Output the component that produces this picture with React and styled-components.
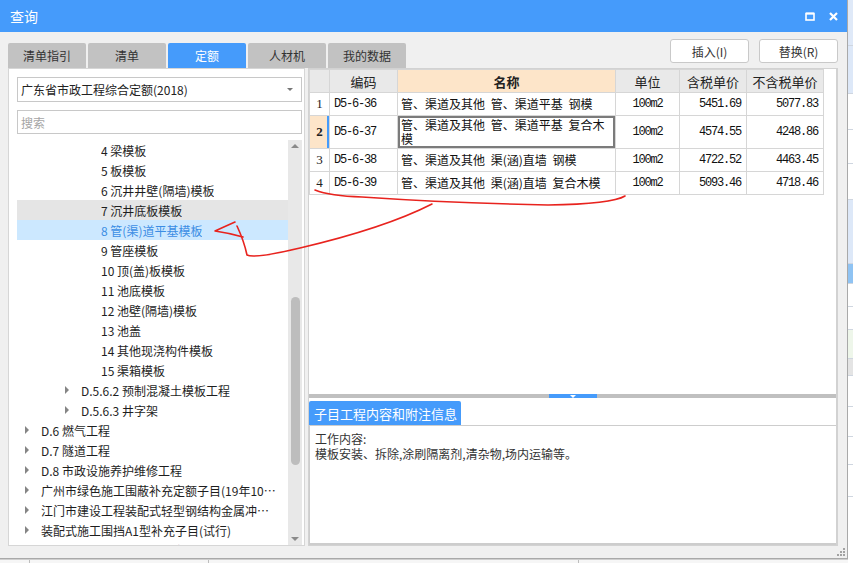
import React from 'react'
import styled, { createGlobalStyle } from 'styled-components'

const BLUE = '#459bfb'
const UI = `"Noto Sans CJK SC", "Noto Sans", sans-serif`
const MONO = `"Liberation Mono", "Noto Sans CJK SC", monospace`

const GlobalStyle = createGlobalStyle`
  html, body { margin: 0; padding: 0; }
  body { font-family: ${UI}; background: #fff; overflow: hidden; }
  * { box-sizing: border-box; }
`

const treeRows = [
  { level: 3, text: '4 梁模板' },
  { level: 3, text: '5 板模板' },
  { level: 3, text: '6 沉井井壁(隔墙)模板' },
  { level: 3, text: '7 沉井底板模板', hover: true },
  { level: 3, text: '8 管(渠)道平基模板', selected: true },
  { level: 3, text: '9 管座模板' },
  { level: 3, text: '10 顶(盖)板模板' },
  { level: 3, text: '11 池底模板' },
  { level: 3, text: '12 池壁(隔墙)模板' },
  { level: 3, text: '13 池盖' },
  { level: 3, text: '14 其他现浇构件模板' },
  { level: 3, text: '15 渠箱模板' },
  { level: 2, text: 'D.5.6.2 预制混凝土模板工程', arrow: true },
  { level: 2, text: 'D.5.6.3 井字架', arrow: true },
  { level: 0, text: 'D.6 燃气工程', arrow: true },
  { level: 0, text: 'D.7 隧道工程', arrow: true },
  { level: 0, text: 'D.8 市政设施养护维修工程', arrow: true },
  { level: 0, text: '广州市绿色施工围蔽补充定额子目(19年10月版)', arrow: true },
  { level: 0, text: '江门市建设工程装配式轻型钢结构金属冲孔板围挡', arrow: true },
  { level: 0, text: '装配式施工围挡A1型补充子目(试行)', arrow: true },
  { level: 0, text: '广州市市政工程计价综合定额(2010)', arrow: true },
]

const quotaRows = [
  { no: '1', code: 'D5-6-36', name: '管、渠道及其他 管、渠道平基 钢模', unit: '100m2', tax: '5451.69', notax: '5077.83' },
  { no: '2', code: 'D5-6-37', name: '管、渠道及其他 管、渠道平基 复合木\n模', unit: '100m2', tax: '4574.55', notax: '4248.86', active: true },
  { no: '3', code: 'D5-6-38', name: '管、渠道及其他 渠(涵)直墙 钢模', unit: '100m2', tax: '4722.52', notax: '4463.45' },
  { no: '4', code: 'D5-6-39', name: '管、渠道及其他 渠(涵)直墙 复合木模', unit: '100m2', tax: '5093.46', notax: '4718.46' },
]

const tabs = ['清单指引', '清单', '定额', '人材机', '我的数据']

const Page = styled.div`
  position: relative;
  width: 853px;
  height: 563px;
  display: grid;
  grid-template-columns: 848px 5px;
  grid-template-rows: 559px 4px;
  overflow: hidden;
`

const Dialog = styled.div`
  grid-column: 1;
  grid-row: 1;
  display: flex;
  flex-direction: column;
  background: #f0f0f0;
  border-right: 1px solid #a9a9a9;
  border-bottom: 1px solid #a9a9a9;
  min-width: 0;
  min-height: 0;
`

const TitleBar = styled.div`
  height: 32px;
  flex: none;
  display: flex;
  align-items: center;
  padding: 0 9px 0 10px;
  background: ${BLUE};
  color: #fff;
  font-size: 14px;
`

const WinButtons = styled.div`
  margin-left: auto;
  display: flex;
  align-items: center;
  gap: 14px;
  margin-top: 1px;
`

const Toolbar = styled.div`
  height: 36px;
  flex: none;
  display: flex;
  align-items: flex-end;
  padding: 0 9px 0 8px;
`

const TabRow = styled.div`
  display: flex;
  gap: 2px;
`

const Tab = styled.div`
  width: 78px;
  height: 25px;
  display: flex;
  align-items: center;
  justify-content: center;
  font-size: 12px;
  border-radius: 2px 2px 0 0;
  background: ${(p) => (p.$active ? BLUE : '#c2c2c2')};
  color: ${(p) => (p.$active ? '#fff' : '#333')};
`

const ActionGroup = styled.div`
  margin-left: auto;
  align-self: flex-start;
  margin-top: 7px;
  display: flex;
  gap: 10px;
`

const ActionButton = styled.div`
  width: 79px;
  height: 24px;
  display: flex;
  align-items: center;
  justify-content: center;
  background: #fff;
  border: 1px solid #c9c9c9;
  border-radius: 3px;
  font-size: 12px;
  color: #333;
`

const Main = styled.div`
  height: 478px;
  flex: none;
  display: flex;
  gap: 3px;
  padding: 0 9px 0 8px;
`

const LeftPanel = styled.div`
  width: 297px;
  flex: none;
  display: flex;
  flex-direction: column;
  background: #fff;
  border: 1px solid #d6d6d6;
  padding: 8px 2px 0 8px;
`

const Select = styled.div`
  height: 25px;
  flex: none;
  display: flex;
  align-items: center;
  padding: 0 8px 0 3px;
  border: 1px solid #c8c8c8;
  font-size: 12px;
  color: #222;
  span { flex: 1; }
`

const Caret = styled.i`
  width: 0;
  height: 0;
  border-left: 3px solid transparent;
  border-right: 3px solid transparent;
  border-top: 3px solid #777;
`

const Search = styled.div`
  height: 24px;
  flex: none;
  margin-top: 8px;
  display: flex;
  align-items: center;
  padding-left: 3px;
  border: 1px solid #c8c8c8;
  font-size: 12px;
  color: #a5a5a5;
`

const Tree = styled.div`
  flex: 1;
  min-height: 0;
  margin-top: 6px;
  display: flex;
`

const TreeList = styled.div`
  flex: 1;
  min-width: 0;
  overflow: hidden;
`

const TreeRow = styled.div`
  height: 20px;
  display: flex;
  align-items: center;
  padding-left: ${(p) => 8 + p.$level * 20}px;
  padding-right: 8px;
  font-size: 12px;
  background: ${(p) => (p.$selected ? '#cce8ff' : p.$hover ? '#e5e5e5' : 'transparent')};
  color: ${(p) => (p.$selected ? '#3b8de4' : '#1e1e1e')};
`

const ArrowSlot = styled.span`
  width: 16px;
  flex: none;
  display: flex;
  align-items: center;
`

const Arrow = styled.i`
  width: 0;
  height: 0;
  border-top: 4px solid transparent;
  border-bottom: 4px solid transparent;
  border-left: 4px solid #858585;
`

const RowText = styled.span`
  white-space: nowrap;
  overflow: hidden;
  text-overflow: ellipsis;
`

const ScrollBar = styled.div`
  width: 14px;
  flex: none;
  display: flex;
  flex-direction: column;
  align-items: center;
  background: #e8e8e8;
`

const ScrollArrow = styled.i`
  flex: none;
  margin: ${(p) => (p.$down ? 'auto 0 4px' : '4px 0 0')};
  width: 0;
  height: 0;
  border-left: 4px solid transparent;
  border-right: 4px solid transparent;
  border-bottom: ${(p) => (p.$down ? 'none' : '4px solid #8a8a8a')};
  border-top: ${(p) => (p.$down ? '4px solid #8a8a8a' : 'none')};
`

const Thumb = styled.div`
  flex: none;
  width: 9px;
  height: 168px;
  margin-top: 149px;
  border-radius: 5px;
  background: #bdbdbd;
`

const RightPanel = styled.div`
  flex: 1;
  min-width: 0;
  display: flex;
  flex-direction: column;
  background: #fff;
  border: 1px solid #d2d2d2;
  border-right-width: 2px;
`

const GridArea = styled.div`
  height: 325px;
  flex: none;
`

const Table = styled.table`
  table-layout: fixed;
  border-collapse: collapse;
  width: 514px;
  td, th {
    border: 1px solid #d6d6d6;
    padding: 0;
    overflow: hidden;
  }
`

const HeadCell = styled.th`
  height: 23px;
  font-size: 13px;
  color: #222;
  font-weight: ${(p) => (p.$bold ? 700 : 400)};
  background: ${(p) => (p.$accent ? '#fde5c9' : '#e9e9e9')};
  position: relative;
  &::after {
    content: '';
    display: ${(p) => (p.$accent ? 'block' : 'none')};
    position: absolute;
    right: 0;
    bottom: -1px;
    width: 40%;
    height: 1px;
    background: ${BLUE};
  }
`

const NumCell = styled.td`
  height: ${(p) => (p.$tall ? 33 : 23)}px;
  text-align: center;
  font-family: "Liberation Serif", serif;
  font-size: 13px;
  font-weight: ${(p) => (p.$active ? 700 : 400)};
  color: #222;
  background: ${(p) => (p.$active ? '#fde5c9' : '#fff')};
  box-shadow: ${(p) => (p.$active ? `inset -2px 0 0 ${BLUE}` : 'none')};
`

const MonoCell = styled.td`
  font-family: ${MONO};
  font-size: 12px;
  letter-spacing: -1.2px;
  color: #111;
  text-align: ${(p) => p.$align || 'left'};
  padding: 0 ${(p) => (p.$align === 'right' ? 5 : 4)}px 0 4px !important;
`

const NameCell = styled.td`
  font-size: 12px;
  line-height: 14px;
  color: #111;
  white-space: pre-line;
  word-spacing: 3px;
  padding: 0 3px !important;
  box-shadow: ${(p) => (p.$active ? 'inset 0 0 0 2px #7b7b7b' : 'none')};
`

const Splitter = styled.div`
  height: 4px;
  flex: none;
  display: flex;
  justify-content: center;
  background: #c0c0c0;
`

const SplitHandle = styled.div`
  width: 48px;
  display: flex;
  justify-content: center;
  align-items: center;
  background: ${BLUE};
  i {
    width: 0;
    height: 0;
    border-left: 3px solid transparent;
    border-right: 3px solid transparent;
    border-top: 3px solid #fff;
  }
`

const InfoTab = styled.div`
  align-self: flex-start;
  margin-top: 3px;
  height: 24px;
  display: flex;
  align-items: center;
  padding: 0 4px 0 5px;
  border-radius: 2px 2px 0 0;
  background: ${BLUE};
  color: #fff;
  font-size: 13px;
`

const InfoBox = styled.div`
  flex: 1;
  border: 1px solid #cdcdcd;
  border-bottom-width: 2px;
  border-right: none;
  padding: 5px 5px;
  font-size: 12px;
  line-height: 15px;
  color: #333;
`

const Footer = styled.div`
  flex: 1;
  display: flex;
  justify-content: flex-end;
  align-items: flex-end;
  padding: 0 2px 2px 0;
`

const SideStrip = styled.div`
  grid-column: 2;
  grid-row: 1 / span 2;
  display: flex;
  flex-direction: column;
  background: #fff;
  overflow: hidden;
`

const StripBand = styled.div`
  height: ${(p) => p.$h}px;
  flex: none;
  background: ${(p) => p.$c};
  border-bottom: 1px solid #cfd6e0;
`

const BottomStrip = styled.div`
  grid-column: 1;
  grid-row: 2;
  display: flex;
  background: #f6f6f6;
  border-top: 1px solid #cfcfcf;
`

const BottomCell = styled.div`
  width: ${(p) => p.$w}px;
  flex: none;
  border-right: 1px solid #bdbdbd;
`

const Annotation = styled.svg`
  position: absolute;
  left: 0;
  top: 0;
  pointer-events: none;
`

const MaxIcon = () => (
  <svg width="10" height="9" viewBox="0 0 10 9">
    <rect x="1" y="1.5" width="8" height="6.5" fill="none" stroke="#fff" strokeWidth="1.6" />
    <rect x="1" y="0.5" width="8" height="2" fill="#fff" />
  </svg>
)

const CloseIcon = () => (
  <svg width="9" height="9" viewBox="0 0 9 9">
    <path d="M1 1 L8 8 M8 1 L1 8" stroke="#fff" strokeWidth="2.2" />
  </svg>
)

const Grip = () => (
  <svg width="9" height="9" viewBox="0 0 9 9">
    <g fill="#a3a3a3">
      <rect x="7" y="1" width="2" height="2" />
      <rect x="4" y="4" width="2" height="2" />
      <rect x="7" y="4" width="2" height="2" />
      <rect x="1" y="7" width="2" height="2" />
      <rect x="4" y="7" width="2" height="2" />
      <rect x="7" y="7" width="2" height="2" />
    </g>
  </svg>
)

const stripBands = [
  { h: 46, c: '#dfe9f8' },
  { h: 48, c: '#dde8f8' },
  { h: 36, c: '#fff' },
  { h: 34, c: '#fff' },
  { h: 36, c: '#fff' },
  { h: 64, c: '#dde8f8' },
  { h: 20, c: '#8fc3f3' },
  { h: 23, c: '#fff' },
  { h: 23, c: '#fff' },
  { h: 29, c: '#eef6ea' },
  { h: 17, c: '#e4e4e4' },
  { h: 31, c: '#fff' },
  { h: 30, c: '#fff' },
  { h: 28, c: '#fff' },
  { h: 32, c: '#fff' },
  { h: 70, c: '#fff' },
]

const App = () => {
  return (
    <>
      <GlobalStyle />
      <Page>
        <Dialog>
          <TitleBar>
            查询
            <WinButtons>
              <MaxIcon />
              <CloseIcon />
            </WinButtons>
          </TitleBar>

          <Toolbar>
            <TabRow>
              {tabs.map((t) => (
                <Tab key={t} $active={t === '定额'}>{t}</Tab>
              ))}
            </TabRow>
            <ActionGroup>
              <ActionButton>插入(I)</ActionButton>
              <ActionButton>替换(R)</ActionButton>
            </ActionGroup>
          </Toolbar>

          <Main>
            <LeftPanel>
              <Select>
                <span>广东省市政工程综合定额(2018)</span>
                <Caret />
              </Select>
              <Search>搜索</Search>
              <Tree>
                <TreeList>
                  {treeRows.map((r) => (
                    <TreeRow key={r.text} $level={r.level} $hover={r.hover} $selected={r.selected}>
                      <ArrowSlot>{r.arrow && <Arrow />}</ArrowSlot>
                      <RowText>{r.text}</RowText>
                    </TreeRow>
                  ))}
                </TreeList>
                <ScrollBar>
                  <ScrollArrow />
                  <Thumb />
                  <ScrollArrow $down />
                </ScrollBar>
              </Tree>
            </LeftPanel>

            <RightPanel>
              <GridArea>
                <Table>
                  <colgroup>
                    <col style={{ width: 20 }} />
                    <col style={{ width: 68 }} />
                    <col style={{ width: 218 }} />
                    <col style={{ width: 64 }} />
                    <col style={{ width: 67 }} />
                    <col style={{ width: 77 }} />
                  </colgroup>
                  <thead>
                    <tr>
                      <HeadCell />
                      <HeadCell>编码</HeadCell>
                      <HeadCell $bold $accent>名称</HeadCell>
                      <HeadCell>单位</HeadCell>
                      <HeadCell>含税单价</HeadCell>
                      <HeadCell>不含税单价</HeadCell>
                    </tr>
                  </thead>
                  <tbody>
                    {quotaRows.map((r) => (
                      <tr key={r.code}>
                        <NumCell $active={r.active} $tall={r.active}>{r.no}</NumCell>
                        <MonoCell>{r.code}</MonoCell>
                        <NameCell $active={r.active}>{r.name}</NameCell>
                        <MonoCell $align="center">{r.unit}</MonoCell>
                        <MonoCell $align="right">{r.tax}</MonoCell>
                        <MonoCell $align="right">{r.notax}</MonoCell>
                      </tr>
                    ))}
                  </tbody>
                </Table>
              </GridArea>
              <Splitter>
                <SplitHandle><i /></SplitHandle>
              </Splitter>
              <InfoTab>子目工程内容和附注信息</InfoTab>
              <InfoBox>
                工作内容:
                <br />
                模板安装、拆除,涂刷隔离剂,清杂物,场内运输等。
              </InfoBox>
            </RightPanel>
          </Main>

          <Footer>
            <Grip />
          </Footer>
        </Dialog>

        <SideStrip>
          {stripBands.map((b, i) => (
            <StripBand key={i} $h={b.h} $c={b.c} />
          ))}
        </SideStrip>

        <BottomStrip>
          <BottomCell $w={30} />
          <BottomCell $w={179} />
          <BottomCell $w={370} />
        </BottomStrip>

        <Annotation width="853" height="563" viewBox="0 0 853 563">
          <g fill="none" stroke="#e8231e" strokeWidth="1.6" strokeLinecap="round" strokeLinejoin="round">
            <path d="M315 190 Q330 196 362 197 Q450 203 548 205 Q612 204 625 196" />
            <path d="M235 222 Q226 226 215 231 Q229 233 243 237" />
            <path d="M237 226 Q244 241 247 255 Q254 259 300 248 Q385 228 432 204" />
          </g>
        </Annotation>
      </Page>
    </>
  )
}

export default App
